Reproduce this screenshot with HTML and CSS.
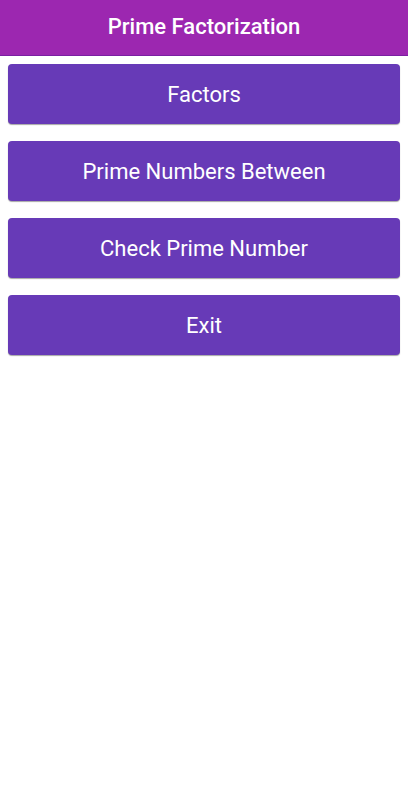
FILE: index.html
```html
<!DOCTYPE html>
<html>
<head>
  <title>Prime Factorization</title>
  <meta name="viewport" content="width=device-width, initial-scale=1.0">
  <link rel="stylesheet" href="styles.css">
</head>
<body>
  <div class="app-bar">Prime Factorization</div>
  <div class="menu">
    <button class="menu-btn">Factors</button>
    <button class="menu-btn">Prime Numbers Between</button>
    <button class="menu-btn">Check Prime Number</button>
    <button class="menu-btn">Exit</button>
  </div>
</body>
</html>
```

FILE: styles.css
```css
body {
  margin: 0;
  font-family: Roboto, "Noto Sans", sans-serif;
  background: #fff;
}

.app-bar {
  height: 56px;
  background: #9c27b0;
  border-bottom: 1px solid #7b1fa2;
  color: #fff;
  font-size: 22px;
  font-weight: 500;
  display: flex;
  align-items: center;
  justify-content: center;
  padding-bottom: 2px;
  box-sizing: border-box;
}

.menu {
  display: flex;
  flex-direction: column;
  gap: 17px;
  padding: 8px;
}

.menu-btn {
  height: 60px;
  border: none;
  border-radius: 4px;
  background: #673ab7;
  color: #fff;
  font-family: Roboto, "Noto Sans", sans-serif;
  font-size: 22px;
  box-shadow: 0 1px 1px rgba(0, 0, 0, 0.35);
}
```
